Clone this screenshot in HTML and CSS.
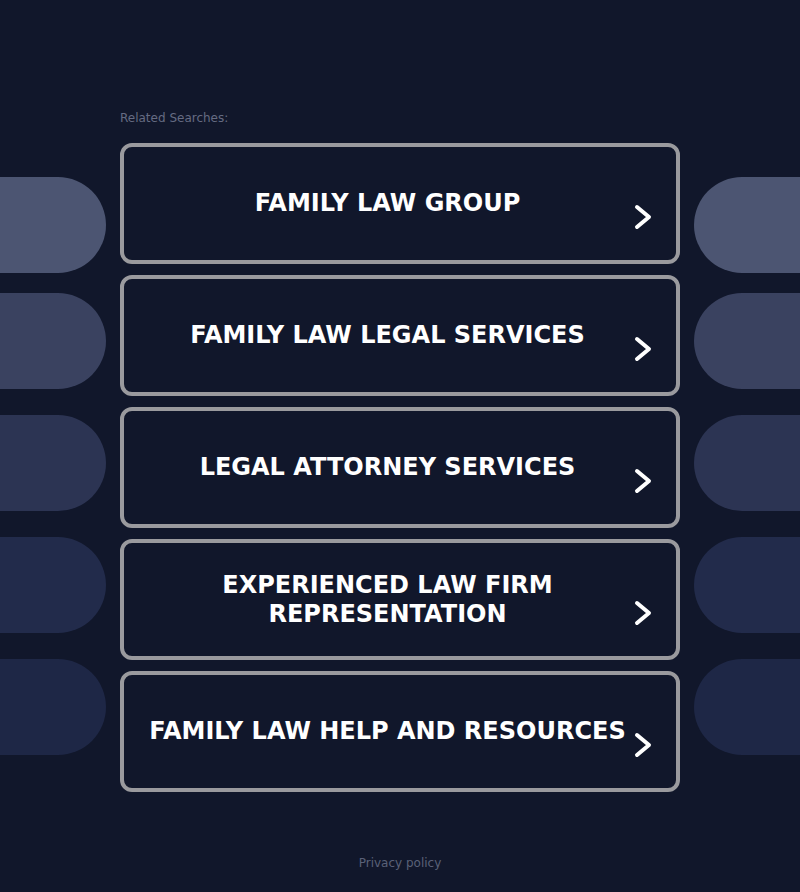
FILE: index.html
```html
<!DOCTYPE html>
<html>
<head>
<meta charset="utf-8">
<link rel="stylesheet" href="styles.css">
</head>
<body>
<div class="deco deco-left">
  <div class="pill p1"></div><div class="pill p2"></div><div class="pill p3"></div><div class="pill p4"></div><div class="pill p5"></div>
</div>
<div class="deco deco-right">
  <div class="pill p1"></div><div class="pill p2"></div><div class="pill p3"></div><div class="pill p4"></div><div class="pill p5"></div>
</div>
<main class="wrap">
  <div class="label">Related Searches:</div>
  <div class="list">
    <a class="card" href="#"><span class="text">FAMILY LAW GROUP</span><svg class="chev" viewBox="0 0 20 28"><path d="M4 4 L16 14 L4 24" fill="none" stroke="#fff" stroke-width="4" stroke-linecap="round" stroke-linejoin="round"/></svg></a>
    <a class="card" href="#"><span class="text">FAMILY LAW LEGAL SERVICES</span><svg class="chev" viewBox="0 0 20 28"><path d="M4 4 L16 14 L4 24" fill="none" stroke="#fff" stroke-width="4" stroke-linecap="round" stroke-linejoin="round"/></svg></a>
    <a class="card" href="#"><span class="text">LEGAL ATTORNEY SERVICES</span><svg class="chev" viewBox="0 0 20 28"><path d="M4 4 L16 14 L4 24" fill="none" stroke="#fff" stroke-width="4" stroke-linecap="round" stroke-linejoin="round"/></svg></a>
    <a class="card" href="#"><span class="text">EXPERIENCED LAW FIRM REPRESENTATION</span><svg class="chev" viewBox="0 0 20 28"><path d="M4 4 L16 14 L4 24" fill="none" stroke="#fff" stroke-width="4" stroke-linecap="round" stroke-linejoin="round"/></svg></a>
    <a class="card" href="#"><span class="text">FAMILY LAW HELP AND RESOURCES</span><svg class="chev" viewBox="0 0 20 28"><path d="M4 4 L16 14 L4 24" fill="none" stroke="#fff" stroke-width="4" stroke-linecap="round" stroke-linejoin="round"/></svg></a>
  </div>
  <footer class="footer"><a href="#">Privacy policy</a></footer>
</main>
</body>
</html>
```
FILE: styles.css
```css
html, body {
  margin: 0;
  padding: 0;
  background: #11172b;
  height: 892px;
  overflow: hidden;
}
body {
  position: relative;
  font-family: "DejaVu Sans", sans-serif;
}
.deco {
  position: absolute;
  top: 177px;
  width: 106px;
  display: flex;
  flex-direction: column;
  gap: 26px;
}
.deco-left { left: 0; }
.deco-right { right: 0; }
.pill {
  height: 96px;
  width: 106px;
}
.pill.p1 { margin-bottom: -6px; }
.deco-left .pill { border-radius: 0 48px 48px 0; }
.deco-right .pill { border-radius: 48px 0 0 48px; }
.p1 { background: #4c5572; }
.p2 { background: #3a4260; }
.p3 { background: #2c3453; }
.p4 { background: #222b4b; }
.p5 { background: #1e2746; }
.wrap {
  position: relative;
  width: 560px;
  margin: 0 auto;
  padding-top: 110px;
}
.label {
  font-size: 12px;
  color: #656b82;
  height: 16px;
  line-height: 16px;
  margin-bottom: 17px;
}
.list {
  display: flex;
  flex-direction: column;
  gap: 12px;
}
.card {
  box-sizing: border-box;
  height: 121px;
  border: 4px solid #9a9a9e;
  border-radius: 12px;
  background: #11172b;
  display: flex;
  align-items: center;
  padding: 0 23px 0 23px;
  text-decoration: none;
}
.list { gap: 11px; }
.text {
  flex: 1;
  text-align: center;
  color: #ffffff;
  font-weight: bold;
  font-size: 24px;
  line-height: 29px;
  letter-spacing: 0;
}
.chev {
  width: 20px;
  height: 28px;
  margin-left: 5px;
  margin-top: 27px;
  flex: none;
}
.footer {
  margin-top: 64px;
  text-align: center;
  font-size: 12px;
}
.footer a {
  color: #5a6178;
  text-decoration: none;
}
```
